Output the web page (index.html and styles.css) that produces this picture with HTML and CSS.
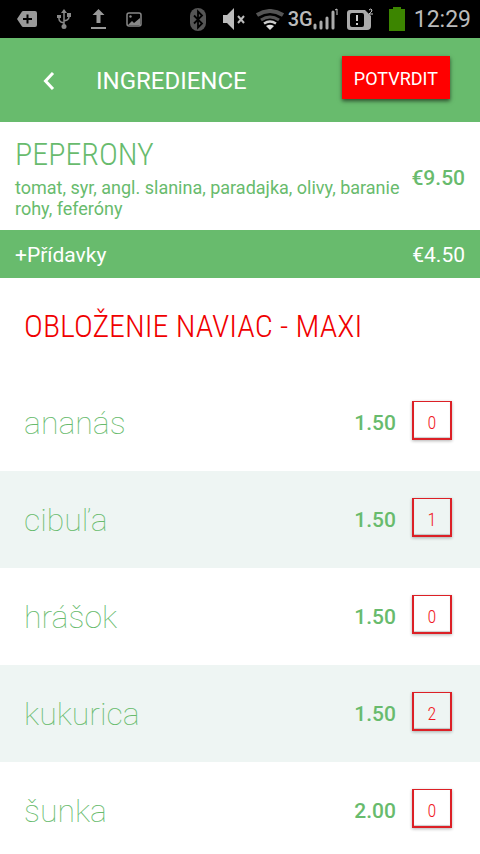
FILE: index.html
```html
<!DOCTYPE html>
<html lang="sk">

<head>
    <meta charset="UTF-8">
    <meta name="viewport" content="width=device-width, initial-scale=1.0">
    <title>Ingredience</title>
    <link rel="stylesheet" href="styles.css">
</head>

<body>
    <div class="status-bar">
        <div class="status-icons status-left">
            <svg width="20" height="16" viewBox="0 0 20 16">
                <path fill="#999" d="M6 0h12q2 0 2 2v12q0 2-2 2H6q-1 0-2-2L0 8l4-6q1-2 2-2z" />
                <path stroke="#000" stroke-width="2" d="M6 8h9M10.500 3.500v9" />
            </svg>
            <svg width="14" height="20" viewBox="0 0 14 20" fill="none" stroke="#888" stroke-width="1.500">
                <path d="M7 3v14M2 7v3q0 2 2 3l3 1M12 6v2q0 2-2 3l-3 1" />
                <path fill="#888" stroke="none" d="M7 0l3 4H4zM0 6h4v3H0zM10 4h4v4h-4z" />
                <circle cx="7" cy="17.500" r="2.500" fill="#888" stroke="none" />
            </svg>
            <svg width="15" height="20" viewBox="0 0 15 20" fill="#999">
                <path d="M7.500 0l6 6h-4v8h-4V6h-4zM0 18h15v2H0z" />
            </svg>
            <svg width="16" height="15" viewBox="0 0 16 15">
                <rect x="1" y="1" width="14" height="13" rx="2" fill="none" stroke="#888" stroke-width="1.500" />
                <circle cx="4.500" cy="4.500" r="1.200" fill="#888" />
                <path fill="#888" d="M2 13l4-4 2 2 6-5v7z" />
            </svg>
        </div>
        <div class="status-icons status-right">
            <svg width="16" height="23" viewBox="0 0 16 23">
                <rect width="16" height="23" rx="8" fill="#555" />
                <path fill="none" stroke="#000" stroke-width="1.800" d="M4 7.500l8 8-4 4v-16l4 4-8 8" />
            </svg>
            <svg class="icon-mute" width="23" height="22" viewBox="0 0 23 22">
                <path fill="#bbb" d="M0 7h4l7-7v22l-7-7H0z" />
                <path stroke="#bbb" stroke-width="2" d="M15 8l6 7M21 8l-6 7" />
            </svg>
            <svg class="icon-wifi" width="28" height="21" viewBox="0 0 28 21">
                <path fill="none" stroke="#555" stroke-width="4" d="M1 6q13-8 26 0" />
                <path fill="none" stroke="#555" stroke-width="3" d="M5 11q9-6 18 0" />
                <path fill="none" stroke="#ccc" stroke-width="2.500" d="M8 14.500q6-4 12 0" />
                <path fill="#ddd" d="M10 17q4-2.500 8 0l-4 4z" />
            </svg>
            <span class="network">3G</span>
            <svg class="icon-signal" width="26" height="22" viewBox="0 0 26 22">
                <path stroke="#aaa" stroke-width="3" stroke-linecap="round" d="M2 17v3M8 14v6M14 10v10M20 4v16" />
                <path fill="none" stroke="#ccc" d="M22 2l2-1v6" />
            </svg>
            <svg class="icon-sim" width="26" height="23" viewBox="0 0 26 23">
                <path fill="#aaa" d="M3 2h15l6 6v10q0 4-4 4H3q-3 0-3-3V5q0-3 3-3z" />
                <rect x="3" y="5" width="14" height="14" rx="2" fill="#000" />
                <path stroke="#ccc" stroke-width="2" d="M10 7v6M10 15v2" />
                <path fill="none" stroke="#ccc" d="M22 2q2-2 3 0 0 2-3 4h4" />
            </svg>
            <svg class="icon-battery" width="16" height="24" viewBox="0 0 16 24">
                <path fill="#3c8500" d="M4 0h8v2h4v22H0V2h4z" />
            </svg>
            <span class="clock">12:29</span>
        </div>
    </div>

    <header class="app-bar">
        <button class="back-button" aria-label="Späť">
            <svg width="12" height="18" viewBox="0 0 12 18">
                <path fill="none" stroke="#fff" stroke-width="3" d="M10 1L2.500 9l7.500 8" />
            </svg>
        </button>
        <h1 class="app-title">INGREDIENCE</h1>
        <button class="confirm-button">POTVRDIT</button>
    </header>

    <section class="product">
        <div class="product-info">
            <h2 class="product-name">PEPERONY</h2>
            <p class="product-desc">tomat, syr, angl. slanina, paradajka, olivy, baranie rohy, feferóny</p>
        </div>
        <div class="product-price">€9.50</div>
    </section>

    <div class="extras">
        <span>+Přídavky</span>
        <span>€4.50</span>
    </div>

    <main class="topping-zone">
        <h2 class="topping-title">OBLOŽENIE NAVIAC - MAXI</h2>
        <ul class="topping-list">
            <li class="topping">
                <span class="topping-name">ananás</span>
                <span class="topping-price">1.50</span>
                <button class="topping-count">0</button>
            </li>
            <li class="topping">
                <span class="topping-name">cibuľa</span>
                <span class="topping-price">1.50</span>
                <button class="topping-count">1</button>
            </li>
            <li class="topping">
                <span class="topping-name">hrášok</span>
                <span class="topping-price">1.50</span>
                <button class="topping-count">0</button>
            </li>
            <li class="topping">
                <span class="topping-name">kukurica</span>
                <span class="topping-price">1.50</span>
                <button class="topping-count">2</button>
            </li>
            <li class="topping">
                <span class="topping-name">šunka</span>
                <span class="topping-price">2.00</span>
                <button class="topping-count">0</button>
            </li>
        </ul>
    </main>
</body>

</html>
```
FILE: styles.css
```css
* {
    box-sizing: border-box;
}

body {
    margin: 0;
    height: 100vh;
    display: flex;
    flex-direction: column;
    overflow: hidden;
    background-color: white;
    color: #68bb6d;
    font-family: Roboto, sans-serif;
}

h1,
h2,
p,
ul {
    margin: 0;
    padding: 0;
    font-weight: normal;
}

button {
    font-family: inherit;
    cursor: pointer;
}

/* status bar */
.status-bar {
    flex: none;
    height: 38px;
    padding: 0 9px 0 17px;
    display: flex;
    align-items: center;
    justify-content: space-between;
    background-color: black;
    color: #bbb;
}

.status-icons {
    display: flex;
    align-items: center;
}

.status-left {
    gap: 20px;
}

.icon-mute {
    margin-left: 17px;
}

.icon-wifi {
    margin-left: 10px;
}

.network {
    margin-left: 4px;
    font-size: 20px;
    font-weight: 500;
}

.icon-sim {
    margin-left: 8px;
}

.icon-battery {
    margin-left: 16px;
}

.clock {
    margin-left: 9px;
    font-size: 23px;
}

/* app bar */
.app-bar {
    flex: none;
    height: 84px;
    padding: 2px 30px 0 37px;
    display: flex;
    align-items: center;
    background-color: #68bb6d;
    color: white;
}

.back-button {
    width: 24px;
    height: 48px;
    padding: 0;
    display: flex;
    align-items: center;
    justify-content: center;
    border: none;
    background: none;
}

.app-title {
    flex: 1;
    margin-left: 35px;
    font-size: 24px;
}

.confirm-button {
    height: 43px;
    margin-bottom: 7px;
    padding: 2px 12px 0;
    border: none;
    background-color: red;
    color: white;
    font-size: 18px;
    box-shadow: 0 2px 4px rgba(0, 0, 0, 0.6);
}

/* product */
.product {
    flex: none;
    padding: 14px 15px 11px;
    display: flex;
    align-items: center;
    justify-content: space-between;
}

.product-info {
    flex: 1;
}

.product-name {
    font-family: "Roboto Condensed", Roboto, sans-serif;
    font-size: 32px;
    font-weight: 300;
    line-height: 37px;
}

.product-desc {
    margin-top: 4px;
    font-size: 18px;
    line-height: 21px;
}

.product-price,
.topping-price {
    font-size: 21px;
    font-weight: 500;
}

.extras {
    flex: none;
    height: 48px;
    padding: 2px 15px 0;
    display: flex;
    align-items: center;
    justify-content: space-between;
    background-color: #68bb6d;
    color: white;
    font-size: 21px;
}

/* toppings */
.topping-zone {
    flex: 1;
    min-height: 0;
    overflow-y: auto;
    scrollbar-width: none;
}

.topping-title {
    padding: 0 24px;
    color: #f00000;
    font-family: "Roboto Condensed", Roboto, sans-serif;
    font-size: 32px;
    font-weight: 300;
    line-height: 96px;
}

.topping-list {
    list-style: none;
}

.topping {
    height: 97px;
    padding: 0 28px 0 24px;
    display: flex;
    align-items: center;
}

.topping:nth-child(even) {
    background-color: #eef5f3;
}

.topping-name {
    flex: 1;
    font-size: 32px;
    font-weight: 100;
}

.topping-count {
    width: 40px;
    height: 39px;
    margin: 0 0 5px 16px;
    padding: 6px 0 0;
    border: 2px solid #dc2026;
    border-width: 1px 2px 2px;
    background-color: transparent;
    color: #f01822;
    font-family: "Roboto Condensed", Roboto, sans-serif;
    font-size: 18px;
    font-weight: 300;
    box-shadow: 0 1px 3px rgba(0, 0, 0, 0.3), inset 0 -1px 1px rgba(0, 0, 0, 0.2);
}
```
